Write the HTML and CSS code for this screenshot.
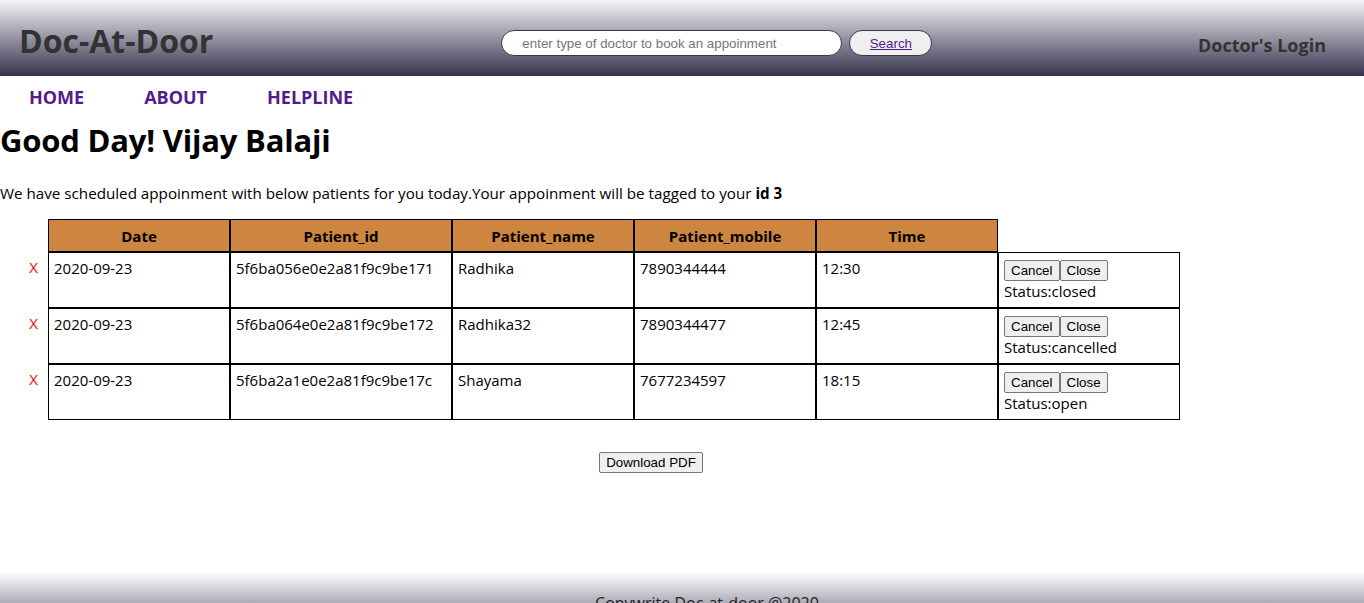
FILE: index.html
```html
<!DOCTYPE html>
<html>
<head>
<meta charset="utf-8">
<title>Doc-At-Door</title>
<link rel="stylesheet" href="styles.css">
</head>
<body>
<header class="topbar">
  <div class="logo">Doc-At-Door</div>
  <form class="search">
    <input class="search-input" type="text" placeholder="enter type of doctor to book an appoinment">
    <span class="search-btn"><a href="#" class="search-link">Search</a></span>
  </form>
  <div class="login">Doctor's Login</div>
</header>
<nav class="nav">
  <a href="#" class="nav-link">HOME</a>
  <a href="#" class="nav-link">ABOUT</a>
  <a href="#" class="nav-link">HELPLINE</a>
</nav>
<main class="content">
  <h1 class="greeting">Good Day! Vijay Balaji</h1>
  <p class="intro">We have scheduled appoinment with below patients for you today.Your appoinment will be tagged to your <b>id 3</b></p>
  <table class="appts">
    <thead>
      <tr>
        <th class="blank"></th>
        <th class="col">Date</th>
        <th class="col wide">Patient_id</th>
        <th class="col">Patient_name</th>
        <th class="col">Patient_mobile</th>
        <th class="col">Time</th>
        <th class="blank"></th>
      </tr>
    </thead>
    <tbody>
      <tr>
        <td class="x">X</td>
        <td>2020-09-23</td>
        <td>5f6ba056e0e2a81f9c9be171</td>
        <td>Radhika</td>
        <td>7890344444</td>
        <td>12:30</td>
        <td class="actions"><div class="btns"><button class="btn">Cancel</button><button class="btn">Close</button></div><div class="status">Status:closed</div></td>
      </tr>
      <tr>
        <td class="x">X</td>
        <td>2020-09-23</td>
        <td>5f6ba064e0e2a81f9c9be172</td>
        <td>Radhika32</td>
        <td>7890344477</td>
        <td>12:45</td>
        <td class="actions"><div class="btns"><button class="btn">Cancel</button><button class="btn">Close</button></div><div class="status">Status:cancelled</div></td>
      </tr>
      <tr>
        <td class="x">X</td>
        <td>2020-09-23</td>
        <td>5f6ba2a1e0e2a81f9c9be17c</td>
        <td>Shayama</td>
        <td>7677234597</td>
        <td>18:15</td>
        <td class="actions"><div class="btns"><button class="btn">Cancel</button><button class="btn">Close</button></div><div class="status">Status:open</div></td>
      </tr>
    </tbody>
  </table>
  <div class="download"><button class="btn">Download PDF</button></div>
</main>
<footer class="footer">Copywrite Doc-at-door @2020</footer>
</body>
</html>
```

FILE: styles.css
```css
* { box-sizing: border-box; }
html, body { margin: 0; padding: 0; }
body {
  font-family: "Open Sans", "Noto Sans", sans-serif;
  font-size: 16px;
  color: #000;
  background: #fff;
}
.topbar {
  height: 76px;
  display: flex;
  align-items: center;
  padding: 0 38px 0 19px;
  background: linear-gradient(to bottom, #f4f4f6, #37334f);
}
.logo {
  font-size: 32px;
  font-weight: 700;
  color: #333;
  margin-top: 4px;
}
.search {
  display: flex;
  align-items: center;
  gap: 7px;
  margin: 10px 0 0 288px;
}
.search-input {
  width: 341px;
  height: 26px;
  border: 1px solid #3a3652;
  border-radius: 13px;
  background: #fff;
  padding: 0 0 0 20px;
  font-family: "Liberation Sans", Arial, sans-serif;
  font-size: 13.33px;
  outline: none;
}
.search-input::placeholder { color: #757575; }
.search-btn {
  width: 83px;
  height: 26px;
  border: 1px solid #3a3652;
  border-radius: 13px;
  background: #efefef;
  display: flex;
  align-items: center;
  justify-content: center;
}
.search-link {
  font-family: "Liberation Sans", Arial, sans-serif;
  font-size: 13.33px;
  color: #551a8b;
  text-decoration: underline;
}
.login {
  margin-left: auto;
  margin-top: 14px;
  font-size: 18px;
  font-weight: 700;
  color: #333;
}
.nav {
  height: 42px;
  display: flex;
  align-items: center;
}
.nav-link {
  margin: 0 30px;
  font-size: 18px;
  font-weight: 700;
  color: #551a8b;
  text-decoration: none;
}
.nav-link:first-child { margin-left: 29px; }
.content { padding: 0; }
.greeting {
  margin: 0;
  font-size: 31px;
  line-height: 44px;
  font-weight: 700;
  letter-spacing: -0.2px;
}
.intro {
  margin: 20px 0 15px;
  line-height: 22px;
  font-size: 15.2px;
}
.appts {
  border-collapse: separate;
  border-spacing: 0;
  font-size: 15px;
}
.appts th, .appts td {
  border: 1px solid #000;
  padding: 5px;
  text-align: left;
  vertical-align: top;
  line-height: 21px;
  width: 182px;
}
.appts th.col {
  background: #cd853f;
  text-align: center;
  font-weight: 700;
  padding: 6px 5px 4px;
}
.appts th.wide { width: 222px; }
.appts th.blank {
  border: none;
  background: transparent;
  width: 48px;
}
.appts th.blank:last-child { width: 182px; }
.appts td.x {
  border: none;
  color: #ff0000;
  text-align: right;
  padding-right: 10px;
  width: 48px;
}
.btns {
  height: 23px;
  padding-top: 2px;
  display: flex;
}
.status { line-height: 21px; }
.btn {
  font-family: "Liberation Sans", Arial, sans-serif;
  font-size: 13.33px;
  padding: 1px 6px;
  border: 1px solid #767676;
  border-radius: 2px;
  background: #efefef;
  color: #000;
  margin: 0;
  height: 21px;
}
.download {
  width: 1302px;
  text-align: center;
  margin-top: 30px;
}
.footer {
  margin-top: 99px;
  height: 76px;
  padding: 20px 0 0 50px;
  text-align: center;
  background: linear-gradient(to bottom, #ffffff, #37334f);
  font-size: 16px;
  color: #222;
}
```
